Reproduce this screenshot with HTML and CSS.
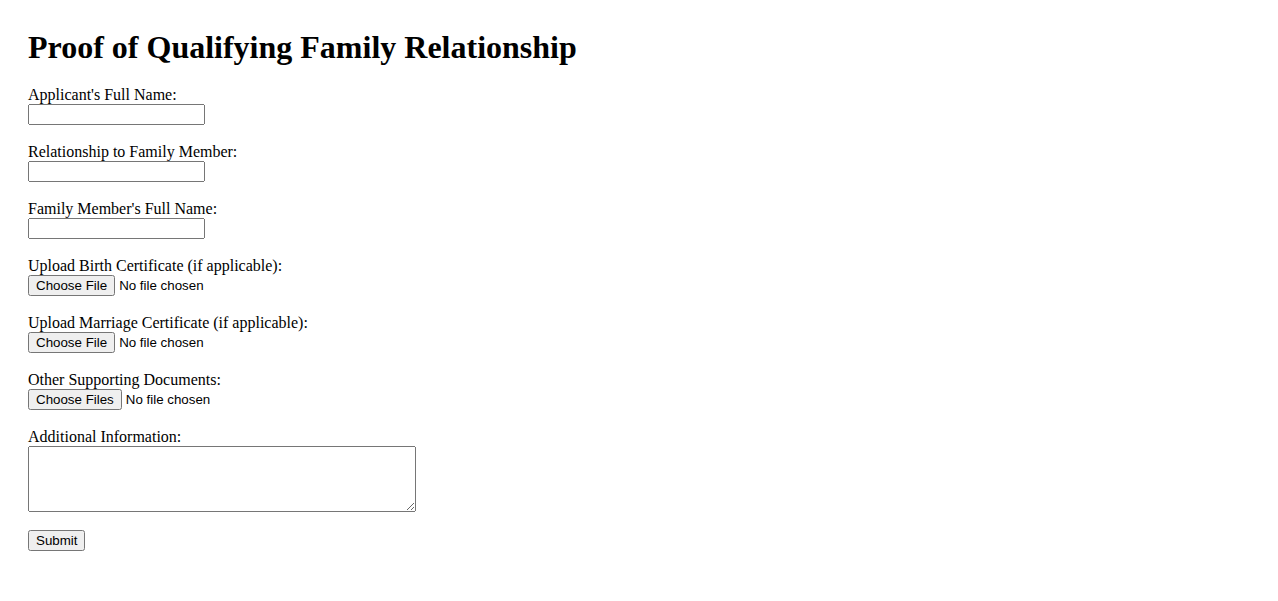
FILE: index.html
```html
<!DOCTYPE html>
<html lang="en">
<head>
<meta charset="utf-8">
<title>Proof of Qualifying Family Relationship</title>
<link rel="stylesheet" href="styles.css">
</head>
<body>
<main class="page">
  <h1 class="title">Proof of Qualifying Family Relationship</h1>
  <form class="form">
    <div class="field">
      <label for="applicant">Applicant's Full Name:</label>
      <input class="text-input" type="text" id="applicant">
    </div>
    <div class="field">
      <label for="relationship">Relationship to Family Member:</label>
      <input class="text-input" type="text" id="relationship">
    </div>
    <div class="field">
      <label for="member">Family Member's Full Name:</label>
      <input class="text-input" type="text" id="member">
    </div>
    <div class="field">
      <label for="birth">Upload Birth Certificate (if applicable):</label>
      <input class="file-input" type="file" id="birth">
    </div>
    <div class="field">
      <label for="marriage">Upload Marriage Certificate (if applicable):</label>
      <input class="file-input" type="file" id="marriage">
    </div>
    <div class="field">
      <label for="other">Other Supporting Documents:</label>
      <input class="file-input" type="file" id="other" multiple>
    </div>
    <div class="field">
      <label for="info">Additional Information:</label>
      <textarea class="textarea" id="info"></textarea>
    </div>
    <div class="field">
      <button class="submit" type="submit">Submit</button>
    </div>
  </form>
</main>
</body>
</html>
```
FILE: styles.css
```css
html, body {
  margin: 0;
  background: #fff;
  color: #000;
}
.page {
  padding: 29px 28px;
  font-family: "Liberation Serif", "Times New Roman", serif;
  font-size: 16px;
}
.title {
  margin: 0 0 20px;
  font-size: 32px;
  font-weight: bold;
}
.form {
  display: flex;
  flex-direction: column;
}
.field {
  display: flex;
  flex-direction: column;
  align-items: flex-start;
  margin-bottom: 18px;
}
.field label {
  line-height: 18px;
}
.text-input {
  box-sizing: border-box;
  width: 177px;
  height: 21px;
  margin: 0;
  font-family: "Liberation Sans", Arial, sans-serif;
  font-size: 13.333px;
}
.file-input {
  margin: 0;
  font-family: "Liberation Sans", Arial, sans-serif;
  font-size: 13.333px;
}
.textarea {
  box-sizing: border-box;
  width: 388px;
  height: 66px;
  margin: 0;
}
.submit {
  margin: 0;
  font-family: "Liberation Sans", Arial, sans-serif;
  font-size: 13.333px;
}
```
